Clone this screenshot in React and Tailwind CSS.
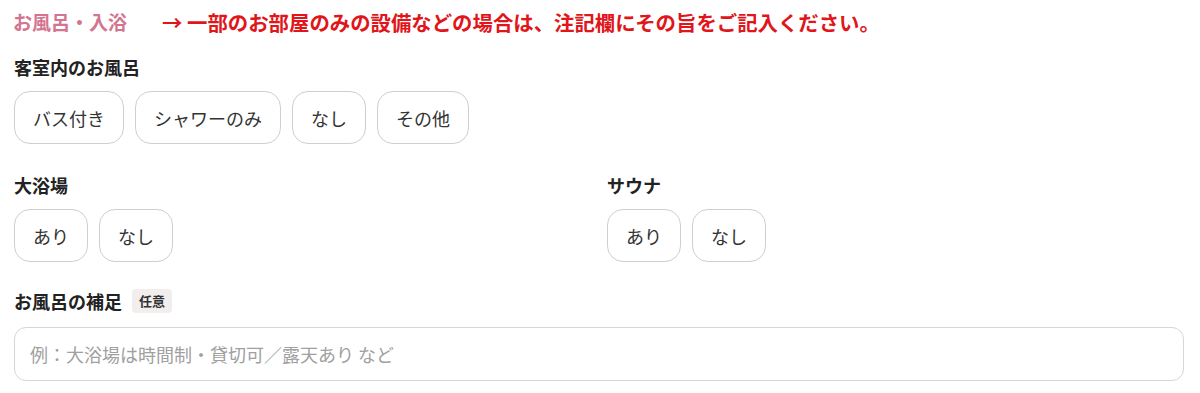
import React from 'react';

const font = { fontFamily: '"Noto Sans CJK JP", "Noto Sans", sans-serif' };

const Pill = ({ label }) => (
  <button
    type="button"
    className="h-[53px] px-[18px] rounded-[16px] border border-[#cfcfcf] bg-white text-[18px] text-[#333] leading-none"
  >
    {label}
  </button>
);

const Field = ({ title, options }) => (
  <div>
    <div className="text-[18px] font-bold text-[#222] leading-[20px]">{title}</div>
    <div className="mt-[14px] flex gap-[11px]">
      {options.map((o) => (
        <Pill key={o} label={o} />
      ))}
    </div>
  </div>
);

const App = () => {
  return (
    <div className="w-[1200px] h-[393px] bg-white px-[14px] pt-[10px]" style={font}>
      <div className="flex items-center h-[24px]">
        <span className="text-[19px] font-bold text-[#d4758f] -ml-[1px]">お風呂・入浴</span>
        <span className="ml-[35px] text-[20.4px] font-bold text-[#e0161b]">
          → 一部のお部屋のみの設備などの場合は、注記欄にその旨をご記入ください。
        </span>
      </div>

      <div className="mt-[23px]">
        <Field title="客室内のお風呂" options={['バス付き', 'シャワーのみ', 'なし', 'その他']} />
      </div>

      <div className="mt-[31px] grid grid-cols-2 gap-4 w-[1170px]">
        <Field title="大浴場" options={['あり', 'なし']} />
        <Field title="サウナ" options={['あり', 'なし']} />
      </div>

      <div className="mt-[27px] w-[1170px]">
        <div className="flex items-center h-[24px] gap-[10px]">
          <span className="text-[18px] font-bold text-[#222]">お風呂の補足</span>
          <span className="px-[7px] h-[24px] flex items-center rounded-[4px] bg-[#f3eeee] text-[13px] font-bold text-[#333]">
            任意
          </span>
        </div>
        <input
          type="text"
          placeholder="例：大浴場は時間制・貸切可／露天あり など"
          className="mt-[14px] w-full h-[54px] rounded-[12px] border border-[#d6d6d6] px-[15px] text-[18px] text-[#333] placeholder:text-[#a0a0a0] outline-none"
          style={font}
        />
      </div>
    </div>
  );
};

export default App;
